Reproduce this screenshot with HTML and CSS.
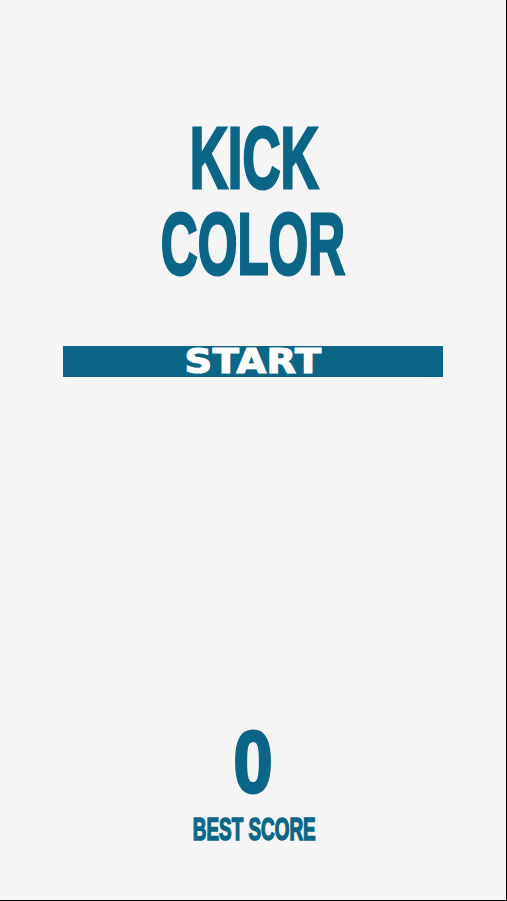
FILE: index.html
```html
<!DOCTYPE html>
<html lang="en">
<head>
    <meta charset="UTF-8">
    <meta name="viewport" content="width=device-width, initial-scale=1.0">
    <title>Kick Color</title>
    <link rel="stylesheet" href="styles.css">
</head>
<body>

<div class="screen">
    <h1 class="title">
        <span class="title-line">KICK</span>
        <span class="title-line">COLOR</span>
    </h1>

    <button class="start-btn" onclick="startGame()"><span>START</span></button>

    <div class="best">
        <div class="best-score" id="bestScore">0</div>
        <div class="best-label">BEST SCORE</div>
    </div>
</div>

<script>
    let bestScore = parseInt(localStorage.getItem('kickColorBest')) || 0;
    document.getElementById('bestScore').innerText = bestScore;

    function startGame() {
        // game screen is not built yet
    }
</script>

</body>
</html>
```

FILE: styles.css
```css
body {
    margin: 0;
    padding: 0;
    background-color: #f5f5f5;
    font-family: "Liberation Sans", Arial, sans-serif;
}
.screen {
    box-sizing: border-box;
    height: 100vh;
    display: flex;
    flex-direction: column;
    padding-top: 115px;
    padding-bottom: 52px;
    border-right: 1px solid #000;
    border-bottom: 1px solid #000;
    color: #0b6586;
}
.title {
    margin: 0;
    font-size: 88px;
    line-height: 86px;
    font-weight: bold;
    text-align: center;
    -webkit-text-stroke: 3px #0b6586;
}
.title-line {
    display: block;
    transform: scaleX(0.58);
}
.title-line:first-child {
    padding-left: 4px;
    transform: scaleX(0.6);
}
.start-btn {
    display: block;
    width: 75%;
    height: 31px;
    margin: 59px auto 0;
    padding: 0;
    border: none;
    border-radius: 0;
    background-color: #0b6586;
    color: #fff;
    font-family: "DejaVu Sans", sans-serif;
    font-size: 33px;
    font-weight: bold;
    line-height: 31px;
    cursor: pointer;
}
.start-btn span {
    display: inline-block;
    letter-spacing: 0.5px;
    -webkit-text-stroke: 1.2px #fff;
    transform: scaleX(1.16);
}
.best {
    margin-top: auto;
    text-align: center;
    font-weight: bold;
}
.best-score {
    font-size: 88px;
    line-height: 70px;
    -webkit-text-stroke: 3px #0b6586;
    transform: scaleX(0.8);
}
.best-label {
    margin-top: 15px;
    padding-left: 4px;
    font-size: 31px;
    line-height: 36px;
    -webkit-text-stroke: 1.5px #0b6586;
    transform: scaleX(0.61);
}
```
